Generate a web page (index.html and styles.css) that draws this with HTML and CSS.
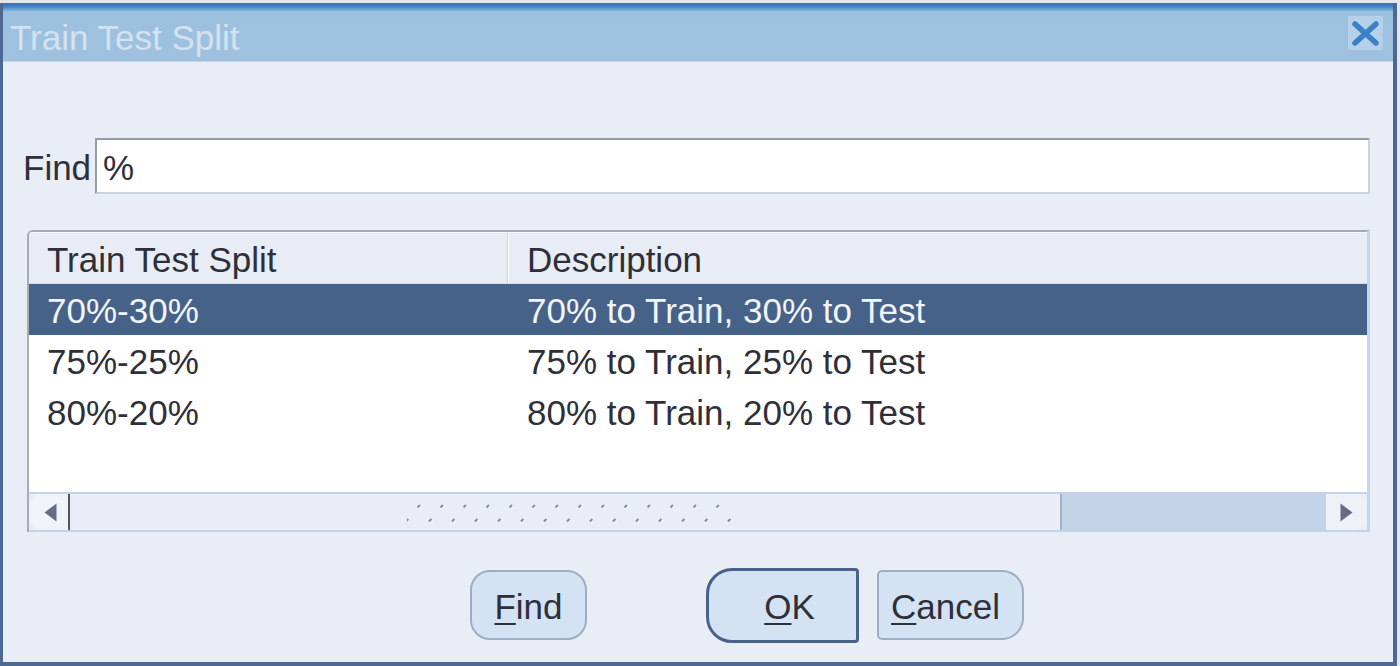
FILE: index.html
```html
<!DOCTYPE html>
<html>
<head>
<meta charset="utf-8">
<link rel="stylesheet" href="styles.css">
</head>
<body>
<div class="window">
  <div class="titlebar">
    <span class="title">Train Test Split</span>
    <span class="close">
      <svg width="35" height="34" viewBox="0 0 35 34"><path d="M7 8 L28 27 M28 8 L7 27" stroke="#3a82c6" stroke-width="5.5" stroke-linecap="round"/></svg>
    </span>
  </div>
  <div class="content">
    <div class="find-row">
      <span class="find-label">Find</span>
      <div class="find-input">%</div>
    </div>
    <div class="table">
      <div class="thead">
        <div class="cell c1">Train Test Split</div>
        <div class="divider"></div>
        <div class="cell c2">Description</div>
      </div>
      <div class="tbody">
        <div class="row selected"><div class="cell c1">70%-30%</div><div class="cell c2">70% to Train, 30% to Test</div></div>
        <div class="row"><div class="cell c1">75%-25%</div><div class="cell c2">75% to Train, 25% to Test</div></div>
        <div class="row"><div class="cell c1">80%-20%</div><div class="cell c2">80% to Train, 20% to Test</div></div>
        <div class="empty"></div>
      </div>
      <div class="hscroll">
        <div class="sb-left"><svg class="arrow" width="13" height="19" viewBox="0 0 13 19"><path d="M12.5 0.5 L0.5 9.5 L12.5 18.5 Z" fill="#656c89"/></svg></div>
        <div class="sb-thumb">
          <svg class="grip" width="330" height="22" viewBox="0 0 330 22">
            <defs>
              <pattern id="grip" width="23" height="22" patternUnits="userSpaceOnUse">
                <path d="M11 7 L13.5 4.5" stroke="#ffffff" stroke-width="2.6"/>
                <path d="M-0.5 21 L2 18.5" stroke="#ffffff" stroke-width="2.6"/>
                <path d="M22.5 21 L25 18.5" stroke="#ffffff" stroke-width="2.6"/>
                <path d="M10.5 6.5 L13 4" stroke="#7f8da5" stroke-width="2.2"/>
                <path d="M-1 20.5 L1.5 18" stroke="#7f8da5" stroke-width="2.2"/>
                <path d="M22 20.5 L24.5 18" stroke="#7f8da5" stroke-width="2.2"/>
              </pattern>
            </defs>
            <rect width="330" height="22" fill="url(#grip)"/>
          </svg>
        </div>
        <div class="sb-track"></div>
        <div class="sb-right"><svg class="arrow" width="13" height="19" viewBox="0 0 13 19"><path d="M0.5 0.5 L12.5 9.5 L0.5 18.5 Z" fill="#656c89"/></svg></div>
      </div>
    </div>
    <div class="buttons">
      <button class="btn btn-find"><u>F</u>ind</button>
      <button class="btn btn-ok"><u>O</u>K</button>
      <button class="btn btn-cancel"><u>C</u>ancel</button>
    </div>
  </div>
</div>
</body>
</html>
```
FILE: styles.css
```css
html, body {
  margin: 0;
  padding: 0;
  background: #e4e7ec;
}
body {
  width: 1400px;
  height: 666px;
  overflow: hidden;
  font-family: "Liberation Sans", Arial, sans-serif;
}
.window {
  margin-top: 3px;
  width: 1397px;
  height: 663px;
  box-sizing: border-box;
  border-left: 3px solid #4d6892;
  border-right: 4px solid #4d6892;
  border-bottom: 4px solid #4d6892;
  background: #e9eef6;
  display: flex;
  flex-direction: column;
}
.titlebar {
  height: 59px;
  box-sizing: border-box;
  background: linear-gradient(to bottom, #3375bc 0px, #3d7fc3 3px, #78a7d5 7px, #9dc0df 9px, #9fc1df 100%);
  border-bottom: 1px solid #c4d7ea;
  display: flex;
  align-items: center;
  justify-content: space-between;
  padding: 6px 10px 0 7px;
}
.title {
  font-size: 35px;
  line-height: 35px;
  color: #d4e2ef;
  padding-top: 4px;
}
.close {
  width: 35px;
  height: 34px;
  background: #b6d0e9;
  display: flex;
  margin-top: -4px;
}
.content {
  display: flex;
  flex-direction: column;
}
.find-row {
  display: flex;
  align-items: center;
  margin-top: 76px;
  padding-left: 20px;
}
.find-label {
  font-size: 35px;
  color: #2f2f3a;
  width: 72px;
  padding-top: 4px;
}
.find-input {
  width: 1275px;
  height: 56px;
  box-sizing: border-box;
  background: #fff;
  border: 2px solid #c9d3de;
  border-top-color: #959ca5;
  border-left-color: #959ca5;
  font-size: 35px;
  line-height: 52px;
  padding-left: 6px;
  padding-top: 2px;
  color: #2f2f3a;
}
.table {
  margin-top: 36px;
  margin-left: 24px;
  width: 1343px;
  height: 302px;
  box-sizing: border-box;
  border-top: 2px solid #a7acb3;
  border-left: 2px solid #a7acb3;
  border-right: 3px solid #c5d6ea;
  border-top-left-radius: 6px;
  display: flex;
  flex-direction: column;
  background: #fff;
  overflow: hidden;
}
.thead {
  height: 52px;
  box-sizing: border-box;
  display: flex;
  background: #e8edf5;
  border-top: 1px solid #f6f8fb;
  border-bottom: 1px solid #d3dce8;
}
.cell {
  font-size: 35px;
  line-height: 49px;
  padding-left: 18px;
  padding-top: 2px;
  color: #2f2f3a;
  white-space: nowrap;
}
.thead .cell {
  padding-top: 3px;
  line-height: 47px;
}
.c1 { width: 460px; }
.divider {
  width: 2px;
  background: linear-gradient(to right, #cfd5dd 0 1px, #fbfcfe 1px 2px);
}
.row {
  display: flex;
  height: 51px;
}
.row .c1 { width: 462px; }
.row.selected {
  background: #476288;
}
.row.selected .cell {
  color: #f1f5fb;
}
.empty {
  height: 55px;
}
.hscroll {
  height: 40px;
  box-sizing: border-box;
  display: flex;
  background: #e9eef6;
  border-top: 2px solid #c3d4e9;
  border-bottom: 2px solid #c3d4e9;
}
.arrow {
  flex-shrink: 0;
  width: 13px;
  height: 19px;
}
.sb-left {
  width: 41px;
  flex-shrink: 0;
  box-sizing: border-box;
  border-right: 2px solid #51555e;
  border-radius: 14px 0 0 14px;
  background: #f0f3f9;
  display: flex;
  align-items: center;
  justify-content: center;
  padding-left: 4px;
}
.sb-thumb {
  width: 990px;
  flex-shrink: 0;
  display: flex;
  align-items: center;
  justify-content: center;
  padding-left: 14px;
  box-sizing: border-box;
}
.grip {
  flex-shrink: 0;
}
.sb-track {
  flex: 1;
  background: #c2d3e7;
  border-left: 2px solid #a9b0ba;
}
.sb-right {
  width: 41px;
  flex-shrink: 0;
  box-sizing: border-box;
  background: #eef2f8;
  border-radius: 0 14px 14px 0;
  display: flex;
  align-items: center;
  justify-content: center;
}
.buttons {
  display: flex;
  align-items: center;
  margin-top: 35px;
  height: 76px;
  padding-left: 467px;
}
.btn {
  font-family: "Liberation Sans", Arial, sans-serif;
  font-size: 35px;
  color: #2f2f3a;
  background: #d3e3f4;
  padding: 3px 0 0 0;
  box-sizing: border-box;
  cursor: default;
}
.btn u {
  text-decoration-thickness: 2px;
  text-underline-offset: 4px;
}
.btn-find {
  width: 117px;
  height: 70px;
  border: 2px solid #9eadc1;
  border-radius: 20px;
}
.btn-ok {
  width: 153px;
  height: 75px;
  margin-left: 119px;
  border: 3px solid #4a6289;
  border-radius: 26px 4px 4px 26px;
  padding-left: 14px;
}
.btn-cancel {
  width: 147px;
  height: 70px;
  margin-left: 18px;
  border: 2px solid #9eadc1;
  border-radius: 5px 22px 22px 5px;
  padding-right: 10px;
}
```
